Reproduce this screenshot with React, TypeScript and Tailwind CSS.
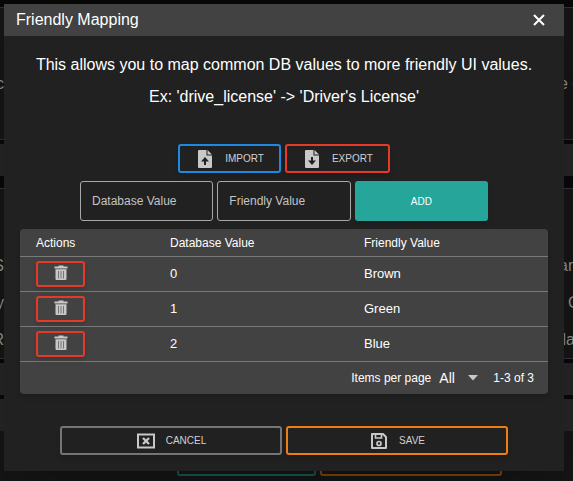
import React, { useState } from "react";

type Mapping = { db: string; friendly: string };

const INITIAL: Mapping[] = [
  { db: "0", friendly: "Brown" },
  { db: "1", friendly: "Green" },
  { db: "2", friendly: "Blue" },
];

function FileIcon({ up = false }: { up?: boolean }) {
  return (
    <svg viewBox="0 0 20 20" className="size-5 fill-[#c8c8c8]" aria-hidden="true">
      <path
        fillRule="evenodd"
        d={
          up
            ? "M4 1h7.500v5.500H17V18a1 1 0 0 1-1 1H4a1 1 0 0 1-1-1V2a1 1 0 0 1 1-1zM10 8l-4 4.500h3V16h2v-3.500h3z"
            : "M4 1h7.500v5.500H17V18a1 1 0 0 1-1 1H4a1 1 0 0 1-1-1V2a1 1 0 0 1 1-1zM10 16l-4-4.500h3V8h2v3.500h3z"
        }
      />
      <path d="M12.500 1L17 5.500h-4.500z" />
    </svg>
  );
}

function TrashIcon() {
  return (
    <svg viewBox="0 0 14 16" className="h-4 w-3.5" aria-hidden="true">
      <path fill="#c8c8c8" d="M4.500 0.500h5v1h4v2H0.500v-2h4zM1.500 4.200h11V14a1 1 0 0 1-1 1h-9a1 1 0 0 1-1-1z" />
      <path stroke="#747474" d="M4.500 6v7.500M7 6v7.500M9.500 6v7.500" />
    </svg>
  );
}

function CancelIcon() {
  return (
    <svg viewBox="0 0 20 20" className="size-5" fill="none" stroke="#c8c8c8" aria-hidden="true">
      <rect x="2" y="3.500" width="16" height="13" strokeWidth="2" />
      <path d="M7 7l6 6M13 7l-6 6" strokeWidth="2.400" />
    </svg>
  );
}

function SaveIcon() {
  return (
    <svg viewBox="0 0 20 20" className="size-5" fill="none" stroke="#c8c8c8" strokeWidth="2" aria-hidden="true">
      <path d="M3 3h11l3 3v11H3z" strokeLinejoin="round" />
      <path d="M6.500 3v4h6V3" strokeWidth="1.700" />
      <circle cx="10" cy="12.500" r="2" strokeWidth="1.700" />
    </svg>
  );
}

const outline =
  "flex h-[29px] items-center justify-center gap-2.5 rounded-[3px] border-2 px-[15px] text-[10px] text-[#d0d0d0] shadow-md";
const field =
  "h-10 w-full min-w-0 rounded-[3px] border border-[#a8a8a8] bg-transparent px-[11px] text-xs text-white placeholder:text-[#c4c4c4]";

function BackdropRow({ left, right }: { left: string; right: string }) {
  return (
    <div className="flex h-[37px] items-center justify-between whitespace-nowrap">
      <span className="flex w-1 justify-end">{left}</span>
      <span className="w-3.5">{right}</span>
    </div>
  );
}

function Backdrop() {
  return (
    <div className="bg-[#080808] pt-[7px] text-base text-[#8c8c8c]" aria-hidden="true">
      <div className="h-[133px] border-y border-[#303030] bg-[#151515] pt-[57px]">
        <BackdropRow left="c" right="e c" />
      </div>
      <div className="mt-1 h-8 bg-[#252525]" />
      <div className="mt-3 h-[171px] border-y border-[#303336] bg-[#151515] pt-[58px]">
        <BackdropRow left="S" right="an" />
        <BackdropRow left="y" right=", C" />
        <BackdropRow left="R" right="lla" />
      </div>
      <div className="mt-1 h-8 bg-[#252525]" />
      <div className="mt-1 h-8 bg-[#252525]" />
      <div className="flex h-[50px] justify-center gap-1 bg-[#151515] pt-4 pl-[106px]">
        <div className="h-[29px] w-[139px] rounded-[3px] border-2 border-[#145650]" />
        <div className="h-[29px] w-[182px] rounded-[3px] border-2 border-[#7c4312]" />
      </div>
    </div>
  );
}

export default function App() {
  const [rows, setRows] = useState(INITIAL);
  const [db, setDb] = useState("");
  const [friendly, setFriendly] = useState("");

  const add = () => {
    if (!db || !friendly) return;
    setRows([...rows, { db, friendly }]);
    setDb("");
    setFriendly("");
  };

  return (
    <main className="relative overflow-hidden font-['Liberation_Sans',Arial,sans-serif]">
      <Backdrop />
      <section
        role="dialog"
        aria-labelledby="title"
        className="absolute top-1 right-[9px] left-1 bg-[#212121] pb-4 text-white shadow-2xl"
      >
        <header className="flex h-8 items-center justify-between bg-[#424242] pr-[17px] pl-3">
          <h2 id="title" className="text-base">Friendly Mapping</h2>
          <button type="button" aria-label="Close">
            <svg viewBox="0 0 16 16" className="size-4" stroke="#fff" strokeWidth="2" aria-hidden="true">
              <path d="M3 3l10 10M13 3L3 13" />
            </svg>
          </button>
        </header>

        <div className="pt-[13px] text-center text-base leading-8">
          <p>This allows you to map common DB values to more friendly UI values.</p>
          <p>Ex: 'drive_license' -&gt; 'Driver's License'</p>
        </div>

        <div className="mt-[31px] flex justify-center gap-1">
          <button type="button" className={`${outline} border-[#1e88e5]`}>
            <FileIcon up />
            IMPORT
          </button>
          <button type="button" className={`${outline} border-[#e53a28]`}>
            <FileIcon />
            EXPORT
          </button>
        </div>

        <div className="mx-auto mt-2 grid max-w-[408px] grid-cols-3 gap-1">
          <input className={field} aria-label="Database Value" placeholder="Database Value" value={db} onChange={(e) => setDb(e.target.value)} />
          <input className={field} aria-label="Friendly Value" placeholder="Friendly Value" value={friendly} onChange={(e) => setFriendly(e.target.value)} />
          <button type="button" onClick={add} className="h-10 rounded-[3px] bg-[#26a69a] text-[10px] shadow-md">
            ADD
          </button>
        </div>

        <div className="mx-4 mt-2 rounded bg-[#424242] text-xs shadow-md">
          <table className="w-full table-fixed border-separate border-spacing-0 text-left">
            <thead>
              <tr className="h-7">
                <th className="w-[134px] border-b border-[#7a7a7a] px-4 font-normal">Actions</th>
                <th className="w-[194px] border-b border-[#7a7a7a] px-4 font-normal">Database Value</th>
                <th className="border-b border-[#7a7a7a] px-4 font-normal">Friendly Value</th>
              </tr>
            </thead>
            <tbody className="text-[13px]">
              {rows.map((row, i) => (
                <tr key={i} className="h-[35px]">
                  <td className="border-b border-[#7a7a7a] px-4">
                    <button
                      type="button"
                      aria-label={`Delete ${row.friendly}`}
                      onClick={() => setRows(rows.filter((_, n) => n !== i))}
                      className="flex h-[26px] w-[49px] items-center justify-center rounded-[3px] border-2 border-[#e53a28] pb-0.5 shadow-md"
                    >
                      <TrashIcon />
                    </button>
                  </td>
                  <td className="border-b border-[#7a7a7a] px-4">{row.db}</td>
                  <td className="border-b border-[#7a7a7a] px-4">{row.friendly}</td>
                </tr>
              ))}
            </tbody>
          </table>
          <footer className="flex h-8 items-center justify-end pr-3.5">
            <label htmlFor="per-page">Items per page</label>
            <span className="relative ml-2 flex items-center">
              <select id="per-page" className="w-10 appearance-none bg-[#424242] text-sm">
                <option>All</option>
                <option>10</option>
              </select>
              <svg viewBox="0 0 12 6" className="pointer-events-none absolute right-0 h-1.5 w-3 fill-[#c8c8c8]" aria-hidden="true">
                <path d="M1 0h10L6 5.500z" />
              </svg>
            </span>
            <span className="ml-3.5">1-3 of 3</span>
          </footer>
        </div>

        <div className="mx-14 mt-8 grid grid-cols-2 gap-1">
          <button type="button" className={`${outline} border-[#757575]`}>
            <CancelIcon />
            CANCEL
          </button>
          <button type="button" className={`${outline} border-[#ef7d14]`}>
            <SaveIcon />
            SAVE
          </button>
        </div>
      </section>
    </main>
  );
}
